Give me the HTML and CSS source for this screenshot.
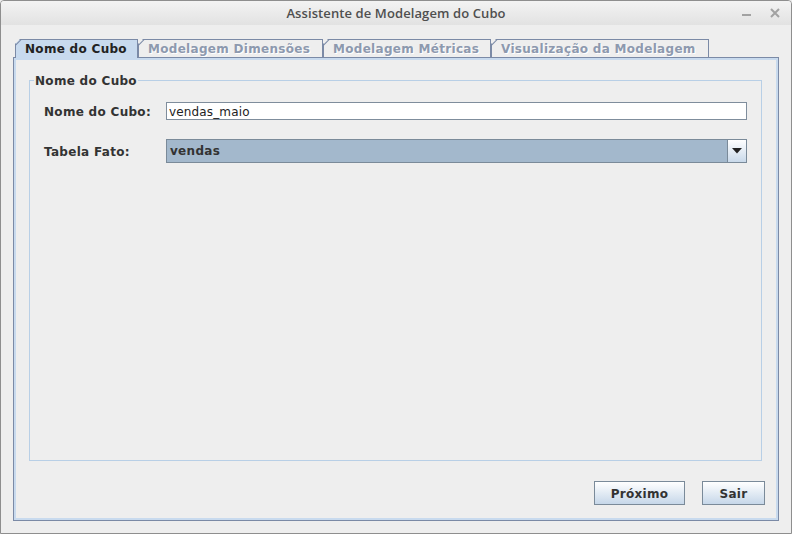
FILE: index.html
```html
<!DOCTYPE html>
<html lang="pt">
<head>
<meta charset="utf-8">
<title>Assistente de Modelagem do Cubo</title>
<link rel="stylesheet" href="styles.css">
</head>
<body>
<div class="window">
  <div class="titlebar">
    <span class="spacer"></span>
    <span class="title">Assistente de Modelagem do Cubo</span>
    <span class="controls">
      <svg class="ctl" width="12" height="12" viewBox="0 0 12 12"><rect x="1" y="7" width="9" height="2" fill="#a2a2a2"/></svg>
      <svg class="ctl" width="12" height="12" viewBox="0 0 12 12"><path d="M2 2 L10 10 M10 2 L2 10" stroke="#a2a2a2" stroke-width="2"/></svg>
    </span>
  </div>
  <div class="content">
    <div class="tabs">
      <div class="tab active t1">Nome do Cubo</div>
      <div class="tab t2">Modelagem Dimensões</div>
      <div class="tab t3">Modelagem Métricas</div>
      <div class="tab t4">Visualização da Modelagem</div>
    </div>
    <div class="panel">
      <div class="group">
        <div class="group-title">Nome do Cubo</div>
        <div class="form">
          <div class="label">Nome do Cubo:</div>
          <div class="field">vendas_maio</div>
          <div class="label">Tabela Fato:</div>
          <div class="combo">
            <div class="combo-value">vendas</div>
            <div class="combo-btn"><svg width="10" height="6" viewBox="0 0 10 6"><path d="M0 0 H10 L5 5.5 Z" fill="#222"/></svg></div>
          </div>
        </div>
      </div>
      <div class="buttons">
        <button class="btn btn-next">Próximo</button>
        <button class="btn btn-exit">Sair</button>
      </div>
    </div>
  </div>
</div>
</body>
</html>
```

FILE: styles.css
```css
html, body {
  margin: 0;
  padding: 0;
}
body {
  width: 792px;
  height: 534px;
  overflow: hidden;
  background: #eeeeee;
  font-family: "DejaVu Sans", sans-serif;
}
.window {
  box-sizing: border-box;
  width: 792px;
  height: 534px;
  border: 1px solid #8e8e8e;
  border-radius: 4px 4px 0 0;
  background: #eeeeee;
  display: flex;
  flex-direction: column;
}
.titlebar {
  flex: none;
  height: 24px;
  display: grid;
  grid-template-columns: 1fr auto 1fr;
  align-items: center;
  background: linear-gradient(#f3f3f3, #e2e2e2);
  border-radius: 3px 3px 0 0;
}
.title {
  font-family: "Open Sans", sans-serif;
  font-size: 13px;
  font-weight: 600;
  letter-spacing: 0.1px;
  color: #4f4f4f;
}
.controls {
  justify-self: end;
  display: flex;
  gap: 16px;
  padding-right: 10px;
  align-items: center;
}
.ctl { display: block; }
.content {
  flex: 1;
  display: flex;
  flex-direction: column;
  padding: 14px 12px 12px 12px;
}
.tabs {
  display: flex;
  height: 18px;
  margin-left: 2px;
  position: relative;
}
.tab {
  position: relative;
  box-sizing: border-box;
  height: 18px;
  border: 1px solid #7b8aa6;
  border-bottom: 0;
  padding-left: 9px;
  padding-top: 1px;
  font-size: 12px;
  font-weight: bold;
  letter-spacing: 0.3px;
  line-height: 17px;
  color: #8d99ae;
  text-shadow: 1px 1px 0 #ffffff;
  white-space: nowrap;
  clip-path: polygon(5px 0, 100% 0, 100% 100%, 0 100%, 0 5px);
}
.tab::before {
  content: "";
  position: absolute;
  left: -1px;
  top: 5px;
  width: 8px;
  height: 1px;
  background: #7b8aa6;
  transform-origin: 0 0;
  transform: rotate(-45deg);
}
.tab.active {
  height: 19px;
  margin-bottom: -1px;
  z-index: 1;
  background: #c8daee;
  color: #222222;
  text-shadow: none;
}
.t1 { width: 123px; }
.t2 { width: 185px; }
.t3 { width: 168px; }
.t4 { width: 218px; }
.panel {
  flex: 1;
  display: flex;
  flex-direction: column;
  border: 1px solid #7b8aa6;
  box-shadow: inset 0 0 0 2px #c8daee;
  padding: 2px;
}
.group {
  position: relative;
  flex: 1;
  margin: 20px 14px 0 13px;
  border: 1px solid #b8cfe6;
}
.group-title {
  position: absolute;
  top: -7px;
  left: 4px;
  padding: 0 1px;
  background: #eeeeee;
  font-size: 12px;
  font-weight: bold;
  letter-spacing: 0.3px;
  line-height: 14px;
  color: #333333;
}
.form {
  display: grid;
  grid-template-columns: 122px 1fr;
  row-gap: 19px;
  align-items: center;
  padding: 21px 14px 0 14px;
}
.label {
  font-size: 12px;
  font-weight: bold;
  letter-spacing: 0.3px;
  color: #333333;
  padding-top: 2px;
}
.field {
  box-sizing: border-box;
  height: 18px;
  border: 1px solid #7f8d9c;
  background: #ffffff;
  padding-left: 2px;
  padding-top: 1px;
  font-size: 12px;
  letter-spacing: 0.15px;
  line-height: 16px;
  color: #222222;
}
.combo {
  box-sizing: border-box;
  height: 24px;
  display: flex;
  border: 1px solid #7a8a99;
}
.combo-value {
  flex: 1;
  background: #a3b8cc;
  padding-left: 3px;
  padding-top: 1px;
  font-size: 12px;
  font-weight: bold;
  letter-spacing: 0.3px;
  line-height: 21px;
  color: #333333;
}
.combo-btn {
  box-sizing: border-box;
  width: 19px;
  border-left: 1px solid #7a8a99;
  background: linear-gradient(#ffffff, #c9d9ea);
  display: flex;
  align-items: center;
  justify-content: center;
}
.combo-btn svg { display: block; }
.buttons {
  display: flex;
  justify-content: flex-end;
  gap: 17px;
  margin: 20px 11px 13px 0;
}
.btn {
  box-sizing: border-box;
  height: 24px;
  border: 1px solid #7a8a99;
  background: linear-gradient(#ffffff, #c6d7e9);
  font-family: "DejaVu Sans", sans-serif;
  font-size: 12px;
  font-weight: bold;
  letter-spacing: 0.3px;
  color: #333333;
  padding: 1px 0 0 0;
}
.btn-next { width: 91px; }
.btn-exit { width: 63px; }
```
